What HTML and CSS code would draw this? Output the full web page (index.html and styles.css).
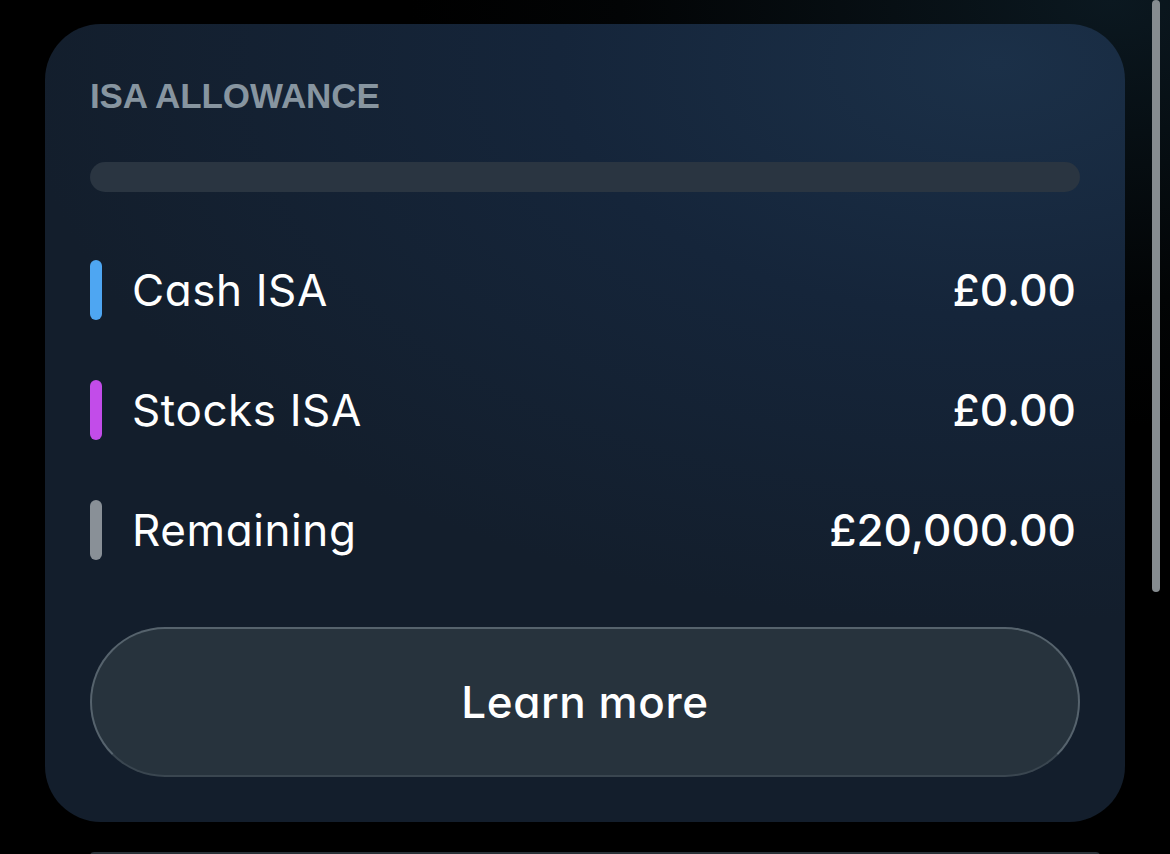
FILE: index.html
```html
<!DOCTYPE html>
<html lang="en">
<head>
    <meta charset="UTF-8">
    <meta name="viewport" content="width=device-width, initial-scale=1.0">
    <title>ISA Allowance</title>
    <link rel="stylesheet" href="styles.css">
</head>
<body>
    <div class="page">
        <section class="card">
            <h2 class="card-title">ISA ALLOWANCE</h2>
            <div class="track"></div>
            <ul class="legend">
                <li class="legend-row">
                    <span class="swatch swatch-cash"></span>
                    <span class="legend-label">Cash ISA</span>
                    <span class="legend-value">£0.00</span>
                </li>
                <li class="legend-row">
                    <span class="swatch swatch-stocks"></span>
                    <span class="legend-label">Stocks ISA</span>
                    <span class="legend-value">£0.00</span>
                </li>
                <li class="legend-row">
                    <span class="swatch swatch-remaining"></span>
                    <span class="legend-label">Remaining</span>
                    <span class="legend-value">£20,000.00</span>
                </li>
            </ul>
            <button class="learn-button">Learn more</button>
        </section>
        <div class="card-next"></div>
    </div>
    <div class="scrollbar"></div>
</body>
</html>
```

FILE: styles.css
```css
body {
    margin: 0;
    background: radial-gradient(ellipse 60% 50% at 95% 0%, #0b1820 0%, #020405 70%, #000000 100%);
    background-color: #000000;
    font-family: Inter, "Noto Sans", sans-serif;
    font-feature-settings: "cv11";
    color: #ffffff;
    height: 854px;
    overflow: hidden;
}
.page {
    padding: 24px 45px 0 45px;
}
.card {
    width: 1080px;
    box-sizing: border-box;
    padding: 52px 45px 45px 45px;
    border-radius: 56px;
    background: radial-gradient(ellipse 90% 70% at 88% 5%, #1b3048 0%, #15253a 45%, #131e2c 100%);
}
.card-title {
    margin: 0;
    font-family: "Liberation Sans", Arial, sans-serif;
    font-weight: bold;
    font-size: 35px;
    line-height: 40px;
    letter-spacing: -0.1px;
    color: #8795a0;
}
.track {
    margin-top: 46px;
    height: 30px;
    border-radius: 15px;
    background-color: #2a3541;
}
.legend {
    list-style: none;
    margin: 68px 0 0 0;
    padding: 0;
    display: flex;
    flex-direction: column;
    gap: 60px;
}
.legend-row {
    display: flex;
    align-items: center;
    height: 60px;
}
.swatch {
    width: 12px;
    height: 60px;
    border-radius: 6px;
    margin-right: 30px;
}
.swatch-cash { background-color: #4ea6f2; }
.swatch-stocks { background-color: #c24ce9; }
.swatch-remaining { background-color: #899097; }
.legend-label {
    flex: 1;
    font-size: 44px;
    font-weight: 400;
    letter-spacing: 0.6px;
}
.legend-value {
    font-size: 44px;
    font-weight: 500;
    margin-right: 4px;
}
.learn-button {
    display: block;
    width: 100%;
    height: 150px;
    margin-top: 67px;
    border-radius: 75px;
    border: 2px solid #56636d;
    border-bottom-color: #3a4650;
    background-color: #27333d;
    color: #ffffff;
    font-family: Inter, "Noto Sans", sans-serif;
    font-feature-settings: "cv11";
    font-size: 44px;
    font-weight: 500;
    letter-spacing: 0.6px;
}
.card-next {
    margin: 30px 0 0 45px;
    width: 1010px;
    height: 2px;
    border-radius: 40px 40px 0 0;
    border-top: 2px solid #2a3238;
}
.scrollbar {
    position: absolute;
    top: 0;
    right: 10px;
    width: 8px;
    height: 592px;
    border-radius: 4px;
    background-color: #868c90;
}
```
